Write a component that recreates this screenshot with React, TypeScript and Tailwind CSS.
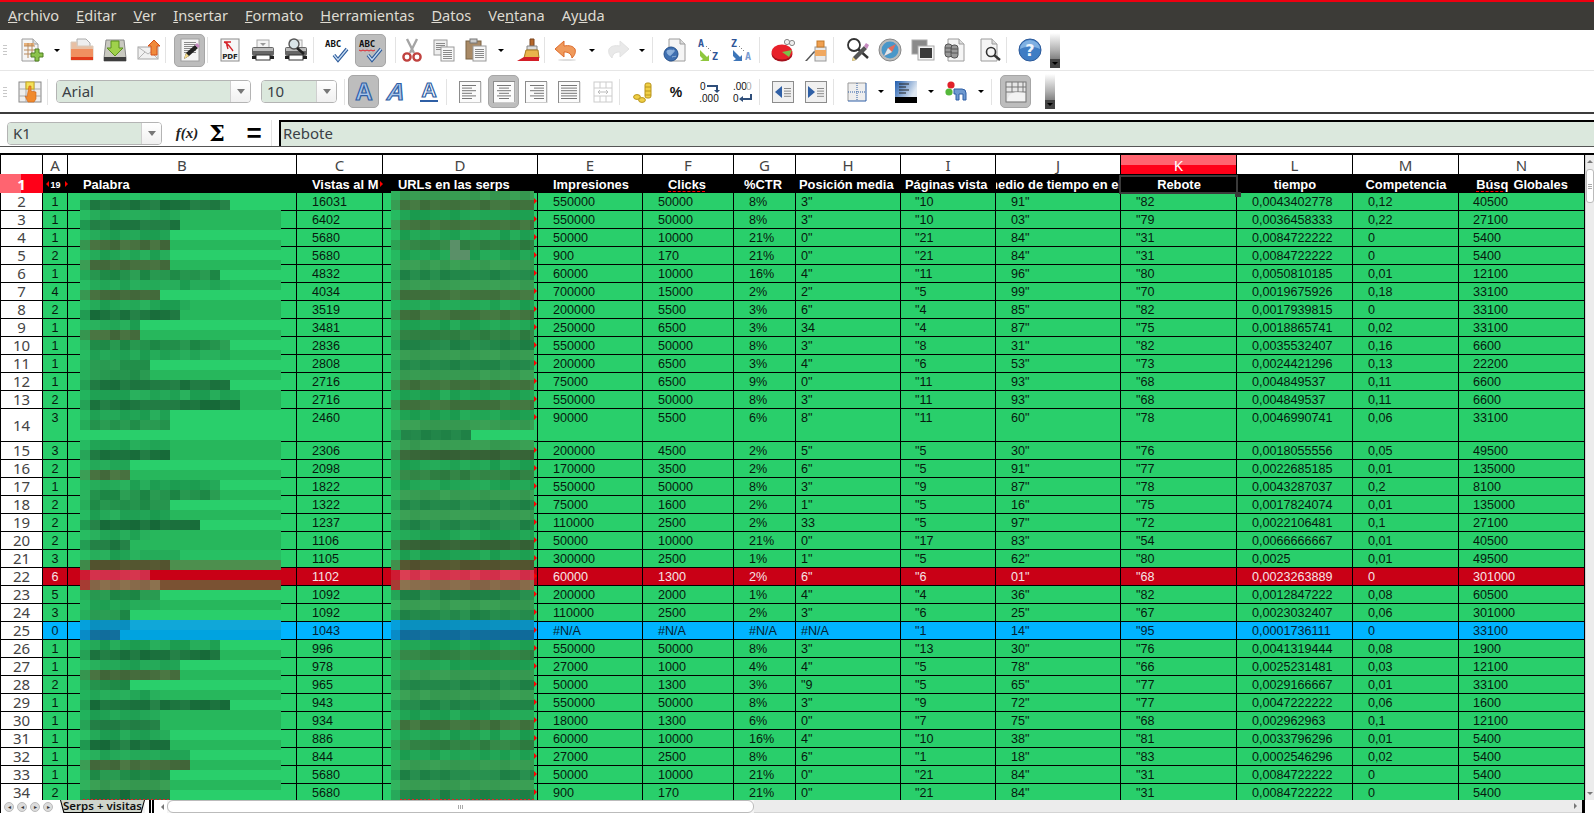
import React from "react";

// ---------- icons ----------
const Ic = ({ children }: { children: React.ReactNode }) => (
  <svg width={24} height={24} viewBox="0 0 24 24" className="block shrink-0 overflow-visible">
    {children}
  </svg>
);

const Page = ({ x = 4 }: { x?: number }) => (
  <g transform={`translate(${x} 1)`}>
    <path d="M0 0h11l5 5v17H0z" fill="#f5f5f5" stroke="#9c9c9c" />
    <path d="M11 0v5h5" fill="#dcdcdc" stroke="#9c9c9c" />
  </g>
);

const Lines = ({ x, y, w, n, gap = 2 }: { x: number; y: number; w: number; n: number; gap?: number }) => (
  <g stroke="#8a8a8a" strokeWidth="1">
    {Array.from({ length: n }, (_, i) => (
      <path key={i} d={`M${x} ${y + i * gap + 0.5}h${w}`} />
    ))}
  </g>
);

const Check = ({ dy = 0 }: { dy?: number }) => (
  <g transform={`translate(0 ${dy})`} fill="none">
    <path d="M9 16l4 5 9-11" stroke="#2c5a9a" strokeWidth="3.6" />
    <path d="M9 16l4 5 9-11" stroke="#c4daf2" strokeWidth="1.4" />
  </g>
);

const Printer = () => (
  <g>
    <rect x="6" y="2" width="12" height="9" fill="#f4f4f4" stroke="#aaa" />
    <rect x="1" y="9" width="22" height="9" rx="2" fill="#666" />
    <rect x="2" y="10" width="20" height="3" fill="#bbb" />
    <rect x="5" y="17" width="14" height="5" fill="#fff" stroke="#333" />
    <rect x="1" y="18" width="4" height="3" fill="#222" />
    <rect x="19" y="18" width="4" height="3" fill="#222" />
  </g>
);

const IconNew = () => (
  <Ic>
    <Page x={2} />
    <rect x="4" y="5" width="10" height="3" fill="#e9b27a" />
    <path d="M4 8h11M4 12h11M4 16h9M8 5v15M12 5v13" stroke="#b98b5f" fill="none" />
    <path d="M15 11h4v4h4v4h-4v4h-4v-4h-4v-4h4z" fill="#8bc34a" stroke="#4f7f22" />
  </Ic>
);
const IconOpen = () => (
  <Ic>
    <path d="M7 1h9l4 4v6H7z" fill="#eee" stroke="#aaa" />
    <path d="M1 4h6v4h16v14H1z" fill="#e8c0a4" stroke="#d8cabb" />
    <path d="M1 11h22v11H1z" fill="#f09060" />
    <path d="M1 19h22v3H1z" fill="#e23b1a" />
  </Ic>
);
const IconSave = () => (
  <Ic>
    <path d="M3 2h18l2 18v3H1v-3z" fill="#c9c9c0" stroke="#888" />
    <rect x="1" y="19" width="22" height="4" fill="#3d3d3d" />
    <path d="M8 3h8v7h4l-8 8-8-8h4z" fill="#9fd14b" stroke="#5b8f1e" />
  </Ic>
);
const IconMail = () => (
  <Ic>
    <rect x="1" y="9" width="20" height="12" fill="#f1f1f1" stroke="#a5a5a5" />
    <path d="M1 9l10 7 10-7M1 21l7-7M21 21l-7-7" fill="none" stroke="#b5b5b5" />
    <path d="M17 2l6 6h-3v9h-6V8h-3z" fill="#f08a3c" stroke="#d4501a" />
  </Ic>
);
const IconEdit = () => (
  <Ic>
    <rect x="3" y="1" width="18" height="22" fill="#f5f5f5" stroke="#a0a0a0" />
    <Lines x={6} y={4} w={12} n={6} />
    <path d="M6 21l2-6 9-8 3 3-9 8z" fill="#222" />
    <path d="M17 7l2-2 3 3-2 2z" fill="#c68ac0" />
    <path d="M6 21l2-6 3 3z" fill="#f2d98a" />
  </Ic>
);
const IconPdf = () => (
  <Ic>
    <rect x="3" y="1" width="18" height="22" fill="#f7f7f7" stroke="#8c8c8c" />
    <path d="M6 4c4 1 6 5 9 9M6 4h7M9 4c-1 3 0 5 1 7" fill="none" stroke="#d5232a" strokeWidth="1.4" />
    <text x="12" y="21" textAnchor="middle" fontSize="7" fontWeight="700" fontFamily="'DejaVu Sans',sans-serif" fill="#222">PDF</text>
  </Ic>
);
const IconPrint = () => (
  <Ic>
    <Printer />
    <path d="M9 5h6l-3 3z" fill="#999" />
  </Ic>
);
const IconPreview = () => (
  <Ic>
    <Printer />
    <circle cx="10" cy="6" r="5" fill="#d9e4e8" stroke="#555" strokeWidth="1.4" />
    <path d="M13 10l7 6" stroke="#222" strokeWidth="2.5" />
  </Ic>
);
const Abc = () => (
  <text x="0" y="9" fontSize="9" fontWeight="700" fontFamily="'DejaVu Sans Mono',monospace" fill="#111">ABC</text>
);
const IconAbc = () => (
  <Ic>
    <Abc />
    <Check dy={1} />
  </Ic>
);
const IconAbcAuto = () => (
  <Ic>
    <Abc />
    <path d="M0 12l2 1 2-1 2 1 2-1 2 1 2-1 2 1 2-1" stroke="#e2222a" fill="none" />
    <Check dy={1} />
  </Ic>
);
const IconCut = () => (
  <Ic>
    <path d="M7 1l7 14M17 1l-7 14" stroke="#a5a5a5" strokeWidth="2.4" />
    <circle cx="7" cy="19" r="3.6" fill="none" stroke="#c0423f" strokeWidth="2.4" />
    <circle cx="17" cy="19" r="3.6" fill="none" stroke="#c0423f" strokeWidth="2.4" />
  </Ic>
);
const IconCopy = () => (
  <Ic>
    <rect x="2" y="2" width="13" height="15" fill="#eee" stroke="#9a9a9a" />
    <Lines x={4} y={5} w={9} n={4} />
    <rect x="9" y="9" width="13" height="14" fill="#f7f7f7" stroke="#9a9a9a" />
    <Lines x={11} y={12} w={9} n={5} />
  </Ic>
);
const IconPaste = () => (
  <Ic>
    <rect x="2" y="3" width="15" height="18" fill="#a98a66" stroke="#7b6343" />
    <rect x="6" y="1" width="7" height="4" fill="#ccc" stroke="#777" />
    <rect x="9" y="8" width="13" height="15" fill="#f7f7f7" stroke="#999" />
    <Lines x={11} y={11} w={9} n={5} />
  </Ic>
);
const IconBrush = () => (
  <Ic>
    <path d="M14 1h4v7h-4z" fill="#b5672a" stroke="#7b451c" />
    <path d="M11 8h10v4H11z" fill="#ddd" stroke="#888" />
    <path d="M10 12h12l1 8H8z" fill="#e9b44c" stroke="#a97a21" />
    <path d="M1 23l7-4h15v4z" fill="#d31e27" />
  </Ic>
);
const IconUndo = () => (
  <Ic>
    <path d="M10 3L1 11l9 8v-5c4 0 7 1 8 6 3-3 4-6 3-9-2-3-6-4-11-3z" fill="#ef9a5c" stroke="#dd6a2a" />
    <ellipse cx="13" cy="22" rx="9" ry="1" fill="#ddd" />
  </Ic>
);
const IconRedo = () => (
  <Ic>
    <path d="M14 3l9 8-9 8v-5c-4 0-7 1-8 6-3-3-4-6-3-9 2-3 6-4 11-3z" fill="#e9e9e9" stroke="#e2e2e2" />
  </Ic>
);
const IconLink = () => (
  <Ic>
    <Page x={6} />
    <circle cx="8" cy="16" r="7" fill="#3f6fb0" stroke="#24508c" />
    <path d="M4 13c3-2 5 0 7-1 1 2-2 3-3 5-2 1-4-1-4-4zM9 19c2-1 3 0 4-1" fill="#8fb2dc" stroke="#8fb2dc" />
  </Ic>
);
const SortLetter = ({ x, y, c, t }: { x: number; y: number; c: string; t: string }) => (
  <text x={x} y={y} fontSize="10" fontWeight="700" fontFamily="'DejaVu Sans Mono',monospace" fill={c}>{t}</text>
);
const IconAZ = () => (
  <Ic>
    <SortLetter x={1} y={9} c="#2f5597" t="A" />
    <SortLetter x={15} y={22} c="#2f5597" t="Z" />
    <path d="M9 8l6 6" stroke="#555" strokeDasharray="1 2" />
    <path d="M3 12l7 7 2-2v6H3l3-2-3-3z" fill="#8fc73e" />
  </Ic>
);
const IconZA = () => (
  <Ic>
    <SortLetter x={1} y={9} c="#2f5597" t="Z" />
    <SortLetter x={15} y={22} c="#7a9bd0" t="A" />
    <path d="M9 8l6 6" stroke="#555" strokeDasharray="1 2" />
    <path d="M3 12l7 7 2-2v6H3l3-2-3-3z" fill="#3d75b8" />
  </Ic>
);
const IconChart = () => (
  <Ic>
    <circle cx="16" cy="4" r="2.6" fill="#eee" stroke="#888" />
    <circle cx="21" cy="5" r="2.6" fill="#eee" stroke="#888" />
    <ellipse cx="11" cy="16" rx="10.5" ry="7.5" fill="#a5101c" />
    <ellipse cx="11" cy="14" rx="10.5" ry="7.5" fill="#e8202a" />
    <path d="M11 14l10-2-3 7z" fill="#7cc04a" />
  </Ic>
);
const IconBottle = () => (
  <Ic>
    <rect x="11" y="9" width="11" height="14" fill="#e9e9e9" stroke="#999" />
    <rect x="11" y="12" width="11" height="6" fill="#f0a860" />
    <rect x="13" y="3" width="7" height="6" fill="#f0a050" stroke="#c47a2a" />
    <path d="M1 23l9-10 1 1-8 9z" fill="#555" />
  </Ic>
);
const IconFind = () => (
  <Ic>
    <circle cx="8" cy="7" r="6" fill="#fff" stroke="#333" strokeWidth="1.8" />
    <path d="M12 11l10 9" stroke="#333" strokeWidth="2.4" />
    <path d="M6 23l1-4 11-11 3 3-11 11z" fill="#555" />
    <path d="M18 8l2-3 3 2-2 4z" fill="#c68ac0" />
    <path d="M6 23l1-4 3 3z" fill="#f2d98a" />
  </Ic>
);
const IconNav = () => (
  <Ic>
    <circle cx="12" cy="12" r="11" fill="#bbb" stroke="#888" />
    <circle cx="12" cy="12" r="8.5" fill="#4a97c9" />
    <path d="M6 18l4-8 8-4-4 8z" fill="#e46b5a" />
    <path d="M6 18l4-8 4 4z" fill="#dfe9ef" />
  </Ic>
);
const IconGallery = () => (
  <Ic>
    <rect x="1" y="2" width="15" height="14" fill="#8a8a8a" stroke="#aaa" />
    <rect x="7" y="8" width="16" height="14" fill="#f4f4f4" stroke="#aaa" />
    <rect x="9" y="10" width="12" height="10" fill="#3a3a3a" />
  </Ic>
);
const IconData = () => (
  <Ic>
    <Page x={5} />
    <g fill="#999" stroke="#555">
      <rect x="2" y="6" width="7" height="13" rx="3" />
      <rect x="8" y="7" width="7" height="13" rx="3" />
      <path d="M2 10h7M2 14h7M8 11h7M8 15h7" fill="none" />
    </g>
  </Ic>
);
const IconZoom = () => (
  <Ic>
    <Page x={3} />
    <circle cx="13" cy="14" r="4.5" fill="#f6f6f6" stroke="#333" strokeWidth="1.6" />
    <path d="M16 17l6 5" stroke="#333" strokeWidth="2.4" />
  </Ic>
);
const IconHelp = () => (
  <Ic>
    <circle cx="12" cy="12" r="11" fill="#3f7dc4" stroke="#2c5a9a" />
    <path d="M2 11a10 9 0 0 1 20 0c-6-3-14-3-20 0z" fill="#7fb0e2" />
    <text x="12" y="18" textAnchor="middle" fontSize="16" fontWeight="700" fontFamily="'DejaVu Sans',sans-serif" fill="#eef5fc">?</text>
  </Ic>
);
const IconStyle = () => (
  <Ic>
    <rect x="1" y="2" width="22" height="20" fill="#eee" stroke="#888" />
    <path d="M8 2v20M16 2v20M1 9h22M1 16h22" stroke="#aaa" />
    <rect x="8" y="2" width="8" height="7" fill="#f3e15a" stroke="#c8a81f" />
    <path d="M11 6h2v5l5 1v7l-2 3H10l-3-6 2 1z" fill="#f08a2e" stroke="#c9621a" strokeWidth="0.6" />
  </Ic>
);
const LetterA = ({ skew = 0, line = false }: { skew?: number; line?: boolean }) => (
  <Ic>
    <text
      x="12"
      y={line ? 17 : 20}
      textAnchor="middle"
      fontSize={line ? 21 : 24}
      fontWeight={700}
      fontFamily="'Liberation Sans',sans-serif"
      fill={line ? "#ffffff" : "#a9c6ea"}
      stroke="#2f5fa5"
      strokeWidth="1.2"
      transform={skew ? "translate(4 0) skewX(-16)" : undefined}
    >
      A
    </text>
    {line && <rect x="3" y="20" width="18" height="2" fill="#2f5fa5" />}
  </Ic>
);
const Align = ({ mode }: { mode: "l" | "c" | "r" | "b" }) => {
  const w = [12, 8, 12, 8, 12, 8];
  return (
    <Ic>
      <rect x="1.5" y="1.5" width="21" height="21" fill="#fbfbfb" stroke="#8c8c8c" />
      <path d="M2 22.5h21M23 2v21" stroke="#ccc" />
      {w.map((n, i) => {
        const wid = mode === "b" ? 16 : n + 2;
        const x = mode === "l" || mode === "b" ? 4 : mode === "c" ? 12 - wid / 2 : 20 - wid;
        return <path key={i} d={`M${x} ${5.5 + i * 2.6}h${wid}`} stroke="#777" />;
      })}
    </Ic>
  );
};
const IconMerge = () => (
  <Ic>
    <rect x="3" y="2" width="18" height="20" fill="#fff" stroke="#ccc" />
    <path d="M3 8h18M3 16h18M9 2v6M15 2v6M9 16v6M15 16v6" stroke="#ccc" />
    <path d="M7 12h10M7 12l2-2M7 12l2 2M17 12l-2-2M17 12l-2 2" stroke="#bbb" fill="none" />
  </Ic>
);
const IconCoins = () => (
  <Ic>
    <rect x="13" y="3" width="6" height="15" rx="2" fill="#f0cf45" stroke="#b8941c" />
    <path d="M13 7h6M13 11h6M13 15h6" stroke="#b8941c" />
    <ellipse cx="5" cy="17" rx="3.4" ry="2.4" fill="#f0cf45" stroke="#b8941c" />
    <ellipse cx="10" cy="20" rx="3.4" ry="2.4" fill="#f0cf45" stroke="#b8941c" />
  </Ic>
);
const IconPercent = () => (
  <Ic>
    <text x="12" y="17" textAnchor="middle" fontSize="14" fontWeight="700" fontFamily="'Liberation Sans',sans-serif" fill="#111">%</text>
  </Ic>
);
const NumText = ({ x, y, t, c = "#111", a = "start" }: { x: number; y: number; t: string; c?: string; a?: "start" | "middle" }) => (
  <text x={x} y={y} textAnchor={a} fontSize="10" fontFamily="'Liberation Sans',sans-serif" fill={c}>{t}</text>
);
const IconNum = () => (
  <Ic>
    <NumText x={3} y={10} t="0" />
    <path d="M10 6h10v5" stroke="#2f4e7a" strokeWidth="2" fill="none" />
    <path d="M17 10h6l-3 3z" fill="#2f4e7a" />
    <NumText x={12} y={22} t=".000" a="middle" />
  </Ic>
);
const IconDec = () => (
  <Ic>
    <NumText x={3} y={10} t=".00" />
    <NumText x={16} y={10} t="0" c="#aaa" />
    <NumText x={3} y={22} t="0" />
    <path d="M21 14v5H11" stroke="#2f4e7a" strokeWidth="2" fill="none" />
    <path d="M13 16v6l-4-3z" fill="#2f4e7a" />
  </Ic>
);
const IconIndent = ({ more }: { more?: boolean }) => (
  <Ic>
    <rect x="1.5" y="1.5" width="21" height="21" fill="#f0f0f0" stroke="#8c8c8c" />
    <path d={more ? "M4 6l7 6-7 6z" : "M11 6l-7 6 7 6z"} fill="#2f5fa5" />
    <Lines x={13} y={8} w={7} n={4} gap={2.6} />
  </Ic>
);
const IconBorders = () => (
  <Ic>
    <rect x="3" y="3" width="18" height="18" fill="#eee" />
    <path d="M3 3v18M3 3h18" stroke="#999" />
    <path d="M21 3v18H3" stroke="#2f5fa5" fill="none" />
    <path d="M3 12h18M12 3v18" stroke="#2f5fa5" strokeDasharray="1 1" />
  </Ic>
);
const IconBg = () => (
  <Ic>
    <defs>
      <linearGradient id="bggrad" x1="0" x2="1" y1="0" y2="0.4">
        <stop offset="0" stopColor="#1f5cae" />
        <stop offset="1" stopColor="#dfe8f2" />
      </linearGradient>
    </defs>
    <rect x="1" y="1" width="22" height="16" fill="url(#bggrad)" />
    <path d="M5 4h10M5 7h7M5 10h10M5 13h7" stroke="#222" />
    <rect x="1" y="17" width="22" height="6" fill="#000" />
  </Ic>
);
const IconCond = () => (
  <Ic>
    <circle cx="7" cy="5" r="3.6" fill="#e0202a" />
    <circle cx="5" cy="12" r="3.6" fill="#55b83a" />
    <path d="M10 9h8a4 4 0 0 1 4 4v7h-3v-6h-4v6h-3v-6h-2z" fill="#6f9ad0" stroke="#2f5fa5" />
  </Ic>
);
const IconGridToggle = () => (
  <Ic>
    <rect x="2" y="2" width="20" height="20" fill="#e6e6e6" stroke="#777" />
    <path d="M2 7h20M2 12h20M8 2v10M14 2v10M19 2v10" stroke="#777" />
    <path d="M3 21c2-8 6-10 18-8v8z" fill="#f2f2f2" />
  </Ic>
);

// ---------- toolbar bits ----------
const Sep = ({ className }: { className: string }) => <div className={`w-px h-[26px] bg-[#e3e3e3] shrink-0 ${className}`} />;
const Arrow = ({ className }: { className: string }) => (
  <div className={`w-2 flex justify-center shrink-0 ${className}`}>
    <div className="w-0 h-0 border-x-[3px] border-x-transparent border-t-[3px] border-t-black" />
  </div>
);
const Slot = ({ className, children }: { className: string; children: React.ReactNode }) => (
  <div className={`shrink-0 ${className}`}>{children}</div>
);
const Toggle = ({ className, children }: { className: string; children: React.ReactNode }) => (
  <div className={`w-[31px] h-[33px] shrink-0 rounded-[5px] bg-[#bdbdbd] border border-[#a6a6a6] flex items-center justify-center ${className}`}>
    {children}
  </div>
);
const Grip = () => (
  <div className="w-[4px] ml-[3px] flex flex-col gap-[2px] shrink-0">
    <div className="h-px bg-[#c8c8c8]" />
    <div className="h-px bg-[#c8c8c8]" />
    <div className="h-px bg-[#c8c8c8]" />
    <div className="h-px bg-[#c8c8c8]" />
  </div>
);
const Handle = ({ className }: { className: string }) => (
  <div className={`w-[10px] h-[35px] shrink-0 bg-gradient-to-b from-white via-[#b0b0b0] to-[#555] flex flex-col justify-end ${className}`}>
    <div className="h-[9px] bg-[#444] flex items-center justify-center">
      <div className="w-0 h-0 border-x-[3px] border-x-transparent border-t-[3px] border-t-black" />
    </div>
  </div>
);
const Combo = ({ className, text, size }: { className: string; text: string; size: string }) => (
  <div className={`h-[23px] shrink-0 flex rounded-[4px] border border-[#b4b4b4] overflow-hidden ${className}`}>
    <div className={`flex-1 bg-[#dbe8dd] flex items-center pl-[5px] text-[#3a3f46] font-['Noto_Sans',sans-serif] ${size}`}>{text}</div>
    <div className="w-[20px] border-l border-[#cfcfcf] bg-gradient-to-b from-white to-[#f0f0f0] flex items-center justify-center">
      <div className="w-0 h-0 border-x-[4px] border-x-transparent border-t-[5px] border-t-[#777]" />
    </div>
  </div>
);

// ---------- sheet data ----------
const COLS = [
  { k: "A", w: "w-[25px]", c: "justify-center" },
  { k: "B", w: "w-[229px]", c: "pl-[15px]" },
  { k: "C", w: "w-[86px]", c: "pl-[15px]" },
  { k: "D", w: "w-[155px]", c: "pl-[15px]" },
  { k: "E", w: "w-[105px]", c: "pl-[15px]" },
  { k: "F", w: "w-[91px]", c: "pl-[15px]" },
  { k: "G", w: "w-[62px]", c: "pl-[15px]" },
  { k: "H", w: "w-[105px]", c: "pl-[5px]" },
  { k: "I", w: "w-[95px]", c: "pl-[14px]" },
  { k: "J", w: "w-[125px]", c: "pl-[15px]" },
  { k: "K", w: "w-[116px]", c: "pl-[15px]" },
  { k: "L", w: "w-[116px]", c: "pl-[15px]" },
  { k: "M", w: "w-[106px]", c: "pl-[15px]" },
  { k: "N", w: "w-[126px]", c: "pl-[14px]" },
];

// row number is index + 2; B and D are blurred in the picture so they stay empty
const ROWS: string[][] = [
  ["1", "16031", "550000", "50000", "8%", '3"', '"10', '91"', '"82', "0,0043402778", "0,12", "40500"],
  ["1", "6402", "550000", "50000", "8%", '3"', '"10', '03"', '"79', "0,0036458333", "0,22", "27100"],
  ["1", "5680", "50000", "10000", "21%", '0"', '"21', '84"', '"31', "0,0084722222", "0", "5400"],
  ["2", "5680", "900", "170", "21%", '0"', '"21', '84"', '"31', "0,0084722222", "0", "5400"],
  ["1", "4832", "60000", "10000", "16%", '4"', '"11', '96"', '"80', "0,0050810185", "0,01", "12100"],
  ["4", "4034", "700000", "15000", "2%", '2"', '"5', '99"', '"70', "0,0019675926", "0,18", "33100"],
  ["2", "3519", "200000", "5500", "3%", '6"', '"4', '85"', '"82', "0,0017939815", "0", "33100"],
  ["1", "3481", "250000", "6500", "3%", "34", '"4', '87"', '"75', "0,0018865741", "0,02", "33100"],
  ["1", "2836", "550000", "50000", "8%", '3"', '"8', '31"', '"82', "0,0035532407", "0,16", "6600"],
  ["1", "2808", "200000", "6500", "3%", '4"', '"6', '53"', '"73', "0,0024421296", "0,13", "22200"],
  ["1", "2716", "75000", "6500", "9%", '0"', '"11', '93"', '"68', "0,004849537", "0,11", "6600"],
  ["2", "2716", "550000", "50000", "8%", '3"', '"11', '93"', '"68', "0,004849537", "0,11", "6600"],
  ["3", "2460", "90000", "5500", "6%", '8"', '"11', '60"', '"78', "0,0046990741", "0,06", "33100"],
  ["3", "2306", "200000", "4500", "2%", '5"', '"5', '30"', '"76', "0,0018055556", "0,05", "49500"],
  ["2", "2098", "170000", "3500", "2%", '6"', '"5', '91"', '"77', "0,0022685185", "0,01", "135000"],
  ["1", "1822", "550000", "50000", "8%", '3"', '"9', '87"', '"78', "0,0043287037", "0,2", "8100"],
  ["2", "1322", "75000", "1600", "2%", '1"', '"5', '16"', '"75', "0,0017824074", "0,01", "135000"],
  ["2", "1237", "110000", "2500", "2%", "33", '"5', '97"', '"72', "0,0022106481", "0,1", "27100"],
  ["2", "1106", "50000", "10000", "21%", '0"', '"17', '83"', '"54', "0,0066666667", "0,01", "40500"],
  ["3", "1105", "300000", "2500", "1%", '1"', '"5', '62"', '"80', "0,0025", "0,01", "49500"],
  ["6", "1102", "60000", "1300", "2%", '6"', '"6', '01"', '"68', "0,0023263889", "0", "301000"],
  ["5", "1092", "200000", "2000", "1%", '4"', '"4', '36"', '"82', "0,0012847222", "0,08", "60500"],
  ["3", "1092", "110000", "2500", "2%", '3"', '"6', '25"', '"67', "0,0023032407", "0,06", "301000"],
  ["0", "1043", "#N/A", "#N/A", "#N/A", "#N/A", '"1', '14"', '"95', "0,0001736111", "0", "33100"],
  ["1", "996", "550000", "50000", "8%", '3"', '"13', '30"', '"76', "0,0041319444", "0,08", "1900"],
  ["1", "978", "27000", "1000", "4%", '4"', '"5', '78"', '"66', "0,0025231481", "0,03", "12100"],
  ["2", "965", "50000", "1300", "3%", '"9', '"5', '65"', '"77', "0,0029166667", "0,01", "33100"],
  ["1", "943", "550000", "50000", "8%", '3"', '"9', '72"', '"77', "0,0047222222", "0,06", "1600"],
  ["1", "934", "18000", "1300", "6%", '0"', '"7', '75"', '"68', "0,002962963", "0,1", "12100"],
  ["1", "886", "60000", "10000", "16%", '4"', '"10', '38"', '"81', "0,0033796296", "0,01", "5400"],
  ["1", "844", "27000", "2500", "8%", '6"', '"1', '18"', '"83', "0,0002546296", "0,02", "5400"],
  ["1", "5680", "50000", "10000", "21%", '0"', '"21', '84"', '"31', "0,0084722222", "0", "5400"],
  ["2", "5680", "900", "170", "21%", '0"', '"21', '84"', '"31', "0,0084722222", "0", "5400"],
];

// ---------- pixelated blur over B and D ----------
type RGB = [number, number, number];
const TONES: Record<string, { c: RGB; j: number }> = {
  d: { c: [30, 118, 64], j: 14 },
  b: { c: [70, 110, 62], j: 10 },
  m: { c: [36, 146, 76], j: 14 },
  l: { c: [34, 166, 86], j: 12 },
  f: { c: [38, 192, 100], j: 5 },
  B: { c: [65, 115, 62], j: 8 },
  E: { c: [55, 100, 55], j: 6 },
  L: { c: [32, 164, 84], j: 10 },
  M: { c: [50, 130, 68], j: 10 },
  P: { c: [56, 156, 82], j: 6 },
  G: { c: [35, 136, 74], j: 10 },
  p: { c: [214, 54, 78], j: 10 },
  t: { c: [135, 106, 74], j: 8 },
  o: { c: [84, 85, 48], j: 6 },
  c: { c: [10, 143, 191], j: 2 },
  e: { c: [17, 110, 156], j: 5 },
};
const MID = "#27b75c";
// y -> [tiles, tone, colour of the rest of the band]
const B_BANDS: [number, number, string, string?][] = [
  [193, 14, "f"],
  [200, 15, "d"],
  [210, 10, "l", MID],
  [220, 10, "d", MID],
  [230, 9, "l"],
  [240, 9, "b", MID],
  [250, 9, "l"],
  [260, 9, "b", MID],
  [270, 14, "m"],
  [280, 15, "l", MID],
  [290, 8, "b"],
  [300, 11, "l", MID],
  [310, 10, "d", MID],
  [320, 6, "l"],
  [330, 6, "b", MID],
  [340, 15, "m"],
  [350, 15, "l", MID],
  [360, 7, "m"],
  [370, 7, "m", MID],
  [380, 15, "d"],
  [390, 16, "l", MID],
  [400, 16, "d", MID],
  [410, 9, "l"],
  [420, 9, "m"],
  [440, 9, "l", MID],
  [450, 9, "d", MID],
  [460, 5, "l"],
  [470, 5, "b", MID],
  [480, 14, "l"],
  [490, 14, "m", MID],
  [500, 9, "m"],
  [510, 9, "l", MID],
  [520, 12, "d"],
  [530, 7, "l", MID],
  [540, 5, "d", MID],
  [550, 10, "l", "#27c063"],
  [560, 9, "o", "#4d8f4e"],
  [570, 7, "p"],
  [580, 8, "t", "#7a5233"],
  [590, 8, "m"],
  [600, 8, "l", MID],
  [610, 5, "m"],
  [620, 5, "c", "#11a7d8"],
  [630, 4, "e", "#00a3e0"],
  [640, 14, "l"],
  [650, 14, "d", MID],
  [660, 10, "l"],
  [670, 10, "b", MID],
  [680, 5, "m"],
  [690, 8, "l", MID],
  [700, 15, "d"],
  [710, 8, "l", MID],
  [720, 8, "d", MID],
  [730, 9, "l"],
  [740, 9, "d", MID],
  [750, 11, "l"],
  [760, 11, "b", MID],
  [770, 9, "m"],
  [780, 9, "P", MID],
  [790, 9, "d"],
];
const D_TONES = "PBLBLMLPGPBLBLMGPGPBLBLP.PELMLPGPGLELoptGPGceLMLPGPGLBLMLPGPG";

const hash = (a: number, b: number) => {
  const x = Math.sin(a * 127.1 + b * 311.7) * 43758.5453;
  return x - Math.floor(x);
};
const rgb = (tone: string, a: number, b: number, pale = false) => {
  const t = TONES[tone];
  const v = (hash(a, b) - 0.5) * 2 * t.j;
  const bg: RGB = tone === "p" || tone === "t" ? [201, 0, 22] : tone === "c" || tone === "e" ? [0, 180, 255] : [41, 207, 107];
  const ch = t.c.map((n, i) => {
    const o = n + v * (i === 1 ? 1 : 0.6);
    return Math.round(pale ? o * 0.55 + bg[i] * 0.45 : o);
  });
  return `rgb(${ch[0]},${ch[1]},${ch[2]})`;
};

const Blur = () => {
  const rects: React.ReactNode[] = [];
  B_BANDS.forEach(([y, n, tone, rest]) => {
    const h = y === 193 ? 7 : 10;
    for (let i = 0; i < n; i++) {
      rects.push(<rect key={`b${y}-${i}`} x={80 + i * 10} y={y} width={10} height={h} fill={rgb(tone, y, i, i === 0)} />);
    }
    if (rest) rects.push(<rect key={`br${y}`} x={80 + n * 10} y={y} width={201 - n * 10} height={h} fill={rest} />);
  });
  D_TONES.split("").forEach((tone, k) => {
    if (tone === ".") {
      for (let i = 0; i < 8; i++) rects.push(<rect key={`dz${i}`} x={391 + i * 10} y={430} width={10} height={10} fill={rgb("G", 430, i, i === 0)} />);
      return;
    }
    const y = k === 0 ? 191 : 190 + k * 10;
    const h = k === 0 ? 9 : 10;
    rects.push(<rect key={`d${k}`} x={391} y={y} width={9} height={h} fill={rgb(tone, y, 99, true)} />);
    for (let i = 0; i < 14; i++) {
      rects.push(<rect key={`d${k}-${i}`} x={400 + i * 10} y={y} width={i === 13 ? 4 : 10} height={h} fill={rgb(tone, y, i + 40)} />);
    }
  });
  return (
    <svg
      width={460}
      height={609}
      viewBox="80 191 460 609"
      shapeRendering="crispEdges"
      className="absolute left-[80px] top-[36px] pointer-events-none"
    >
      {rects}
      <path d="M450 240h10v10h10v10h-20z" fill="#5a9068" />
      <path d="M83 799.5h87M400 799.5h134" stroke="#e2202a" strokeDasharray="2 2" />
    </svg>
  );
};

const Tri = ({ className }: { className: string }) => (
  <div className={`absolute w-0 h-0 border-y-[3px] border-y-transparent border-l-[3px] border-l-[#f00] ${className}`} />
);

const Squiggle = ({ children }: { children: React.ReactNode }) => (
  <span className="underline decoration-dashed decoration-[#f00] decoration-1 underline-offset-2">{children}</span>
);

// ---------- sheet ----------
const HEAD: { c: string; t: React.ReactNode }[] = [
  { c: "justify-center", t: <span className="text-[9px]">19</span> },
  { c: "pl-[15px]", t: "Palabra" },
  { c: "pl-[15px]", t: "Vistas al M" },
  { c: "pl-[15px]", t: <span>URLs en las <Squiggle>serps</Squiggle></span> },
  { c: "pl-[15px]", t: "Impresiones" },
  { c: "pl-[25px]", t: <Squiggle>Clicks</Squiggle> },
  { c: "pl-[10px]", t: "%CTR" },
  { c: "pl-[3px]", t: "Posición media" },
  { c: "pl-[4px]", t: "Páginas vista" },
  { c: "justify-center", t: "Promedio de tiempo en el sitio" },
  { c: "justify-center", t: "Rebote" },
  { c: "justify-center", t: "tiempo" },
  { c: "justify-center", t: "Competencia" },
  { c: "justify-center", t: <span><Squiggle>Búsq</Squiggle><span className="ml-[5px]">Globales</span></span> },
];

const ColumnHeader = () => (
  <div className="flex h-[19px] bg-white">
    <div className="w-[43px] shrink-0 border-r border-black border-l border-l-black" />
    {COLS.map((c) => (
      <div
        key={c.k}
        className={`${c.w} shrink-0 border-r border-black flex items-center justify-center text-[15px] leading-[18px] font-['Noto_Sans',sans-serif] ${
          c.k === "K" ? "bg-gradient-to-b from-[#ff6470] from-50% to-[#ff0018] to-50% text-white" : "text-[#444]"
        }`}
      >
        {c.k}
      </div>
    ))}
  </div>
);

const HeaderRow = () => (
  <div className="flex h-[19px] bg-black text-white font-bold text-[12.9px]">
    <div className="w-[43px] shrink-0 flex relative">
      <div className="w-[21px] bg-[#ff6470]" />
      <div className="w-[22px] bg-[#ff0018]" />
      <div className="absolute inset-0 flex items-center justify-center text-[15px] leading-[18px] text-white font-['Noto_Sans',sans-serif]">1</div>
    </div>
    {COLS.map((c, i) => (
      <div key={c.k} className={`${c.w} shrink-0 relative overflow-hidden flex items-center pt-[2px] leading-[16px] whitespace-pre ${HEAD[i].c}`}>
        {HEAD[i].t}
        {(c.k === "A" || c.k === "C") && <Tri className="right-0 top-[7px]" />}
        {c.k === "A" && <div className="absolute left-[3px] top-[7px] w-0 h-0 border-y-[3px] border-y-transparent border-r-[3px] border-r-[#f00]" />}
      </div>
    ))}
  </div>
);

const Row = ({ cells, n }: { cells: string[]; n: number }) => {
  const bg = n === 22 ? "bg-[#c90016] text-[#f6e4e6]" : n === 25 ? "bg-[#00b4ff] text-[#06222f]" : "bg-[#29cf6b] text-[#07190e]";
  const h = n === 14 ? "h-[33px]" : "h-[18px]";
  const vals = [cells[0], "", cells[1], "", ...cells.slice(2)];
  return (
    <div className={`flex ${h}`}>
      <div className="w-[43px] shrink-0 bg-white border-b border-r border-l border-black flex items-center justify-center text-[15px] leading-[17px] text-[#444] font-['Noto_Sans',sans-serif]">
        {n}
      </div>
      {COLS.map((c, i) => (
        <div key={c.k} className={`${c.w} ${bg} shrink-0 relative border-r border-b border-black flex items-start pt-[1px] ${c.c} text-[12.6px] leading-[16px]`}>
          {vals[i]}
          {c.k === "D" && <Tri className="right-0 top-[5px]" />}
        </div>
      ))}
    </div>
  );
};

const VScroll = () => (
  <div className="w-[9px] shrink-0 bg-[#ececec] flex flex-col items-center pt-[5px] border-l border-[#d0d0d0]">
    <div className="w-0 h-0 border-x-[3px] border-x-transparent border-b-[3px] border-b-[#777]" />
    <div className="w-full h-[34px] mt-[6px] bg-white rounded-[3px] border border-[#bbb] flex flex-col gap-px items-center justify-center">
      <div className="w-[4px] h-px bg-[#aaa]" />
      <div className="w-[4px] h-px bg-[#aaa]" />
      <div className="w-[4px] h-px bg-[#aaa]" />
    </div>
    <div className="flex-1" />
    <div className="mb-[5px] w-0 h-0 border-x-[3px] border-x-transparent border-t-[3px] border-t-[#777]" />
  </div>
);

const NavBtn = ({ t }: { t: string }) => (
  <div className="w-[10px] h-[10px] rounded-full bg-[#dcdcdc] border border-[#bbb] flex items-center justify-center text-[6px] leading-none text-[#333]">
    {t}
  </div>
);

const TabBar = () => (
  <div className="flex h-[13px] bg-[#f4f4f4] items-stretch">
    <div className="w-[60px] shrink-0 flex items-center pl-[3px] gap-[3px] bg-white border-l border-black">
      <NavBtn t="◂" />
      <NavBtn t="◂" />
      <NavBtn t="▸" />
      <NavBtn t="▸" />
    </div>
    <div className="w-[85px] shrink-0 bg-black [clip-path:polygon(0_0,100%_0,96%_100%,4%_100%)] pb-[1px] px-[1px]">
      <div className="h-full flex items-center justify-center bg-[#cfd5cc] [clip-path:polygon(0_0,100%_0,96%_100%,4%_100%)] text-[11.5px] leading-none text-[#111] font-['Noto_Sans',sans-serif] font-semibold whitespace-nowrap">
        Serps + visitas
      </div>
    </div>
    <div className="w-[12px] shrink-0 flex justify-center bg-white">
      <div className="w-[5px] border-x-2 border-black bg-white" />
    </div>
    <div className="w-[10px] shrink-0 flex items-center justify-center bg-white">
      <div className="w-0 h-0 border-y-[3px] border-y-transparent border-r-[3px] border-r-[#777]" />
    </div>
    <div className="w-[587px] shrink-0 bg-white border border-[#bbb] rounded-[6px] flex items-center justify-center gap-px">
      <div className="w-px h-[4px] bg-[#aaa]" />
      <div className="w-px h-[4px] bg-[#aaa]" />
      <div className="w-px h-[4px] bg-[#aaa]" />
    </div>
    <div className="flex-1 bg-[#ececec] border-b border-[#d4d4d4] flex items-center justify-end pr-[5px]">
      <div className="w-0 h-0 border-y-[3px] border-y-transparent border-l-[3px] border-l-[#777]" />
    </div>
    <div className="w-[3px] bg-black shrink-0" />
    <div className="w-[9px] bg-white shrink-0" />
  </div>
);

export default function App() {
  return (
    <div className="w-[1594px] h-[818px] overflow-hidden bg-white flex flex-col font-['Liberation_Sans',sans-serif]">
      <div className="h-[2px] bg-[#ee0010] shrink-0" />

      {/* menu */}
      <div className="h-[28px] shrink-0 bg-[#3c3b37] flex items-center pl-[8px] gap-[17px] text-[14.6px] text-[#dfdbd2] font-['Noto_Sans',sans-serif]">
        <span><u>A</u>rchivo</span>
        <span><u>E</u>ditar</span>
        <span><u>V</u>er</span>
        <span><u>I</u>nsertar</span>
        <span><u>F</u>ormato</span>
        <span><u>H</u>erramientas</span>
        <span><u>D</u>atos</span>
        <span>Ve<u>n</u>tana</span>
        <span>Ay<u>u</u>da</span>
      </div>

      {/* standard toolbar */}
      <div className="h-[41px] shrink-0 flex items-center border-b border-[#e6e6e6]">
        <Grip />
        <Slot className="ml-[13px]"><IconNew /></Slot>
        <Arrow className="ml-[9px]" />
        <Slot className="ml-[9px]"><IconOpen /></Slot>
        <Slot className="ml-[9px]"><IconSave /></Slot>
        <Slot className="ml-[10px]"><IconMail /></Slot>
        <Sep className="ml-[4px]" />
        <Toggle className="ml-[8px]"><IconEdit /></Toggle>
        <Sep className="ml-[2px]" />
        <Slot className="ml-[10px]"><IconPdf /></Slot>
        <Slot className="ml-[9px]"><IconPrint /></Slot>
        <Slot className="ml-[9px]"><IconPreview /></Slot>
        <Sep className="ml-[5px]" />
        <Slot className="ml-[11px]"><IconAbc /></Slot>
        <Toggle className="ml-[6px]"><IconAbcAuto /></Toggle>
        <Sep className="ml-[9px]" />
        <Slot className="ml-[4px]"><IconCut /></Slot>
        <Slot className="ml-[8px]"><IconCopy /></Slot>
        <Slot className="ml-[8px]"><IconPaste /></Slot>
        <Arrow className="ml-[9px]" />
        <Slot className="ml-[11px]"><IconBrush /></Slot>
        <Sep className="ml-[4px]" />
        <Slot className="ml-[9px]"><IconUndo /></Slot>
        <Arrow className="ml-[10px]" />
        <Slot className="ml-[10px]"><IconRedo /></Slot>
        <Arrow className="ml-[8px]" />
        <Sep className="ml-[6px]" />
        <Slot className="ml-[10px]"><IconLink /></Slot>
        <Slot className="ml-[10px]"><IconAZ /></Slot>
        <Slot className="ml-[9px]"><IconZA /></Slot>
        <Sep className="ml-[5px]" />
        <Slot className="ml-[11px]"><IconChart /></Slot>
        <Slot className="ml-[9px]"><IconBottle /></Slot>
        <Sep className="ml-[5px]" />
        <Slot className="ml-[12px]"><IconFind /></Slot>
        <Slot className="ml-[8px]"><IconNav /></Slot>
        <Slot className="ml-[9px]"><IconGallery /></Slot>
        <Slot className="ml-[8px]"><IconData /></Slot>
        <Slot className="ml-[11px]"><IconZoom /></Slot>
        <Sep className="ml-[4px]" />
        <Slot className="ml-[11px]"><IconHelp /></Slot>
        <Handle className="ml-[8px]" />
      </div>

      {/* formatting toolbar */}
      <div className="h-[41px] shrink-0 flex items-center">
        <Grip />
        <Slot className="ml-[11px]"><IconStyle /></Slot>
        <Sep className="ml-[5px]" />
        <Combo className="ml-[8px] w-[195px]" text="Arial" size="text-[15px]" />
        <Combo className="ml-[10px] w-[76px]" text="10" size="text-[15px]" />
        <Sep className="ml-[7px]" />
        <Toggle className="ml-[3px]"><LetterA /></Toggle>
        <Slot className="ml-[5px]"><LetterA skew={1} /></Slot>
        <Slot className="ml-[9px]"><LetterA line /></Slot>
        <Sep className="ml-[5px]" />
        <Slot className="ml-[11px]"><Align mode="l" /></Slot>
        <Toggle className="ml-[6px]"><Align mode="c" /></Toggle>
        <Slot className="ml-[5px]"><Align mode="r" /></Slot>
        <Slot className="ml-[9px]"><Align mode="b" /></Slot>
        <Slot className="ml-[10px]"><IconMerge /></Slot>
        <Sep className="ml-[4px]" />
        <Slot className="ml-[12px]"><IconCoins /></Slot>
        <Slot className="ml-[8px]"><IconPercent /></Slot>
        <Slot className="ml-[9px]"><IconNum /></Slot>
        <Slot className="ml-[9px]"><IconDec /></Slot>
        <Sep className="ml-[5px]" />
        <Slot className="ml-[11px]"><IconIndent /></Slot>
        <Slot className="ml-[9px]"><IconIndent more /></Slot>
        <Sep className="ml-[5px]" />
        <Slot className="ml-[11px]"><IconBorders /></Slot>
        <Arrow className="ml-[8px]" />
        <Slot className="ml-[9px]"><IconBg /></Slot>
        <Arrow className="ml-[9px]" />
        <Slot className="ml-[9px]"><IconCond /></Slot>
        <Arrow className="ml-[9px]" />
        <Sep className="ml-[6px]" />
        <Toggle className="ml-[8px]"><IconGridToggle /></Toggle>
        <Handle className="ml-[14px]" />
      </div>
      <div className="h-[2px] shrink-0 bg-[#3c3c3c]" />

      {/* formula bar */}
      <div className="h-[33px] shrink-0 flex items-center pt-[6px] border-b border-[#555]">
        <Combo className="ml-[7px] w-[155px]" text="K1" size="text-[15px]" />
        <span className="ml-[13px] w-[24px] text-[15px] italic font-bold font-['Liberation_Serif',serif] text-[#222] text-center">f(x)</span>
        <span className="ml-[9px] w-[18px] text-[22px] leading-none font-bold text-black text-center font-['DejaVu_Serif',serif]">Σ</span>
        <span className="ml-[19px] w-[18px] text-[26px] leading-none font-bold text-black text-center font-['Liberation_Sans',sans-serif]">=</span>
        <Sep className="ml-[8px]" />
        <div className="ml-[7px] flex-1 h-[26px] self-end bg-[#dbe8dd] border-t-2 border-l-2 border-black flex items-center pl-[2px] pb-[2px] text-[15px] text-[#3a3f46] font-['Noto_Sans',sans-serif]">
          Rebote
        </div>
      </div>

      {/* sheet */}
      <div className="h-[6px] shrink-0" />
      <div className="h-[2px] shrink-0 bg-black" />
      <div className="flex h-[645px] shrink-0">
        <div className="w-[1585px] shrink-0 relative overflow-hidden">
          <ColumnHeader />
          <HeaderRow />
          {ROWS.map((cells, i) => (
            <Row key={i} cells={cells} n={i + 2} />
          ))}
          <Blur />
          {/* cell cursor on K1 */}
          <div className="absolute left-[1119px] top-[20px] w-[119px] h-[19px] border-2 border-[#3a3a3a]" />
          <div className="absolute left-[1235px] top-[37px] w-[6px] h-[5px] bg-[#3a3a3a]" />
        </div>
        <VScroll />
      </div>
      <TabBar />
    </div>
  );
}
